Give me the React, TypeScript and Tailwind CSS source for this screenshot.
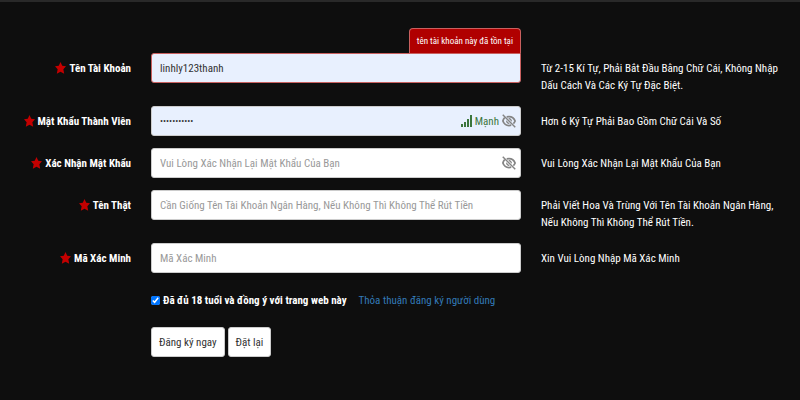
import { FC, ReactNode } from 'react';

const Star: FC = () => (
  <svg viewBox="0 0 22 24" className="h-3 w-[11px] shrink-0 fill-[#c30000]" aria-hidden="true">
    <path d="M11 0l3.500 7.500 7.500 1-5.300 6 1.700 9L11 19.500l-7.400 4 1.700-9L0 8.500l7.500-1z" />
  </svg>
);

const EyeOff: FC = () => (
  <svg viewBox="0 0 28 28" className="h-3.5 w-3.5" fill="none" aria-hidden="true">
    <path
      d="M5.500 7C3.800 8.800 2.400 11.200 1.800 14c2 5.500 7 9 12.200 9 1.500 0 3-.2 4.400-.7M9.500 5.700c1.400-.4 2.900-.7 4.500-.7 5.500 0 10.200 3.500 12.200 9-.7 2-1.900 3.800-3.400 5.200"
      stroke="#848484"
      strokeWidth="3.500"
    />
    <path d="M12.500 8.500a5.600 5.600 0 0 1 7 7zM8.500 12.500a5.600 5.600 0 0 0 7 7z" fill="#848484" />
    <path d="M1.500 1.500l25 25" stroke="#848484" strokeWidth="3" />
  </svg>
);

const Signal: FC = () => (
  <svg viewBox="0 0 11 14" className="h-3.5 w-[11px] fill-[#3c763d]" aria-hidden="true">
    <path d="M0 10h2v3H0zM3 8h2v5H3zM6 5h2v8H6zM9 1h2v12H9z" />
  </svg>
);

type FieldProps = {
  id: string;
  label: string;
  help: string;
  type?: string;
  value?: string;
  placeholder?: string;
  error?: string;
  children?: ReactNode;
};

const Field: FC<FieldProps> = ({
  id,
  label,
  help,
  type = 'text',
  value,
  placeholder,
  error,
  children,
}) => (
  <div className="grid grid-cols-[minmax(0,131fr)_minmax(0,370fr)_minmax(0,259fr)] gap-5">
    <label
      htmlFor={id}
      className="flex h-[30px] items-center justify-end gap-[3px] font-bold whitespace-nowrap"
    >
      <Star />
      {label}
    </label>
    <div className="relative self-start">
      {error && (
        <p className="absolute right-0 bottom-full rounded-t border border-b-0 border-[#c9605f] bg-[#b00000] px-[7px] py-1 text-[9px] leading-4 whitespace-nowrap">
          {error}
        </p>
      )}
      <input
        id={id}
        type={type}
        defaultValue={value}
        placeholder={placeholder}
        className={`block h-[30px] w-full rounded-[3px] border px-2 text-[#333] placeholder:text-[#999] ${
          value ? 'bg-[#e8f0fe]' : 'bg-white'
        } ${error ? 'rounded-tr-none border-[#c9605f]' : 'border-[#ccc]'} ${
          type === 'password' && value ? 'text-[9px]' : ''
        }`}
      />
      <div className="absolute inset-y-0 right-[5px] flex items-center gap-[3px] text-[#3c763d]">
        {children}
      </div>
    </div>
    <p className="pt-[7px] pr-4">{help}</p>
  </div>
);

const EyeButton: FC = () => (
  <button type="button" aria-label="Hiện mật khẩu">
    <EyeOff />
  </button>
);

const App: FC = () => (
  <main className="min-h-screen border-t-2 border-[#292929] bg-[#0e0e0e] pt-[51px] font-['Roboto_Condensed','Liberation_Sans',sans-serif] text-[11px] leading-[17px] text-white">
    <form className="flex flex-col gap-3">
      <Field
        id="account"
        label="Tên Tài Khoản"
        value="linhly123thanh"
        error="tên tài khoản này đã tồn tại"
        help="Từ 2-15 Kí Tự, Phải Bắt Đầu Bằng Chữ Cái, Không Nhập Dấu Cách Và Các Ký Tự Đặc Biệt."
      />
      <Field
        id="password"
        label="Mật Khẩu Thành Viên"
        type="password"
        value="abcdef12345"
        help="Hơn 6 Ký Tự Phải Bao Gồm Chữ Cái Và Số"
      >
        <Signal />
        <span>Mạnh</span>
        <EyeButton />
      </Field>
      <Field
        id="confirm"
        label="Xác Nhận Mật Khẩu"
        type="password"
        placeholder="Vui Lòng Xác Nhận Lại Mật Khẩu Của Bạn"
        help="Vui Lòng Xác Nhận Lại Mật Khẩu Của Bạn"
      >
        <EyeButton />
      </Field>
      <Field
        id="realName"
        label="Tên Thật"
        placeholder="Cần Giống Tên Tài Khoản Ngân Hàng, Nếu Không Thì Không Thể Rút Tiền"
        help="Phải Viết Hoa Và Trùng Với Tên Tài Khoản Ngân Hàng, Nếu Không Thì Không Thể Rút Tiền."
      />
      <Field
        id="captcha"
        label="Mã Xác Minh"
        placeholder="Mã Xác Minh"
        help="Xin Vui Lòng Nhập Mã Xác Minh"
      />
      <div className="grid grid-cols-[minmax(0,131fr)_minmax(0,649fr)] gap-x-5 gap-y-3">
        <div className="col-start-2 flex h-[30px] items-center gap-3 whitespace-nowrap">
          <label className="flex items-center gap-[3px] font-bold">
            <input type="checkbox" defaultChecked className="h-[9px] w-[9px]" />
            Đã đủ 18 tuổi và đồng ý với trang web này
          </label>
          <a href="#terms" className="text-[#337ab7]">
            Thỏa thuận đăng ký người dùng
          </a>
        </div>
        <div className="col-start-2 flex gap-[3px] text-[#333]">
          <button type="submit" className="h-[30px] rounded-[3px] border border-[#ccc] bg-white px-[7px]">
            Đăng ký ngay
          </button>
          <button type="reset" className="h-[30px] rounded-[3px] border border-[#ccc] bg-white px-[7px]">
            Đặt lại
          </button>
        </div>
      </div>
    </form>
  </main>
);

export default App;
